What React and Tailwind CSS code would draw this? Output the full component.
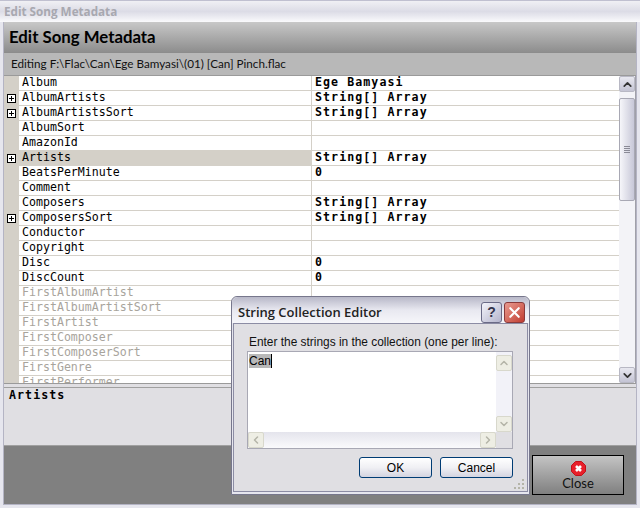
import { ChevronUp, ChevronDown, ChevronLeft, ChevronRight, X } from 'lucide-react'

const rows = [
  { name: 'Album', value: 'Ege Bamyasi' },
  { name: 'AlbumArtists', value: 'String[] Array', plus: true },
  { name: 'AlbumArtistsSort', value: 'String[] Array', plus: true },
  { name: 'AlbumSort' },
  { name: 'AmazonId' },
  { name: 'Artists', value: 'String[] Array', plus: true, selected: true },
  { name: 'BeatsPerMinute', value: '0' },
  { name: 'Comment' },
  { name: 'Composers', value: 'String[] Array' },
  { name: 'ComposersSort', value: 'String[] Array', plus: true },
  { name: 'Conductor' },
  { name: 'Copyright' },
  { name: 'Disc', value: '0' },
  { name: 'DiscCount', value: '0' },
  { name: 'FirstAlbumArtist', muted: true },
  { name: 'FirstAlbumArtistSort', muted: true },
  { name: 'FirstArtist', muted: true },
  { name: 'FirstComposer', muted: true },
  { name: 'FirstComposerSort', muted: true },
  { name: 'FirstGenre', muted: true },
  { name: 'FirstPerformer', muted: true },
]

const mono = "font-['DejaVu_Sans_Mono',monospace] text-[11.6px]"
const monoBold = "font-['DejaVu_Sans_Mono',monospace] text-[11.6px] font-bold tracking-[1.07px] text-black"

const PlusBox = () => (
  <span className="relative block h-[9px] w-[9px] border border-black bg-white">
    <span className="absolute left-[1px] top-[3px] h-px w-[5px] bg-black" />
    <span className="absolute left-[3px] top-[1px] h-[5px] w-px bg-black" />
  </span>
)

const Row = ({ name, value, plus, selected, muted }) => (
  <div className="flex h-[15px] shrink-0">
    <div className="flex w-[15px] shrink-0 items-center justify-center bg-[#d4d0c8]">
      {plus && <PlusBox />}
    </div>
    <div
      className={`flex w-[292px] shrink-0 items-center border-b border-[#d4d0c8] pl-[3px] ${mono} ${selected ? 'bg-[#d4d0c8]' : 'bg-white'} ${muted ? 'text-[#a8a49c]' : 'text-black'}`}
    >
      {name}
    </div>
    <div className="w-px shrink-0 bg-[#d4d0c8]" />
    <div className={`flex flex-1 items-center border-b border-[#d4d0c8] bg-white pl-[3px] ${monoBold}`}>
      {value}
    </div>
  </div>
)

const MainScrollButton = ({ children }) => (
  <div className="flex h-[16px] w-[16px] items-center justify-center rounded-[2px] border border-[#b8b8c4] bg-gradient-to-b from-[#e8e8f0] to-[#c4c4d4] text-[#333]">
    {children}
  </div>
)

const MainScrollbar = () => (
  <div className="flex w-[17px] shrink-0 flex-col items-start border-r border-[#a0a0a8] bg-[#f3f3f7]">
    <MainScrollButton><ChevronUp size={13} strokeWidth={3.2} /></MainScrollButton>
    <div className="mt-[6px] flex h-[103px] w-[16px] items-center justify-center rounded-[2px] border border-[#a8a8b4] bg-gradient-to-r from-[#f6f6fa] to-[#c8c8d8]">
      <div className="flex w-[6px] flex-col gap-px">
        <span className="h-px bg-[#8a8a96]" />
        <span className="h-px bg-[#8a8a96]" />
        <span className="h-px bg-[#8a8a96]" />
        <span className="h-px bg-[#8a8a96]" />
      </div>
    </div>
    <div className="flex-1" />
    <MainScrollButton><ChevronDown size={13} strokeWidth={3.2} /></MainScrollButton>
  </div>
)

const DisabledArrow = ({ children, className = '' }) => (
  <div className={`flex h-[16px] w-[16px] items-center justify-center rounded-[2px] border border-[#d8d8cc] bg-[#eeeee4] text-[#b4b4a8] ${className}`}>
    {children}
  </div>
)

const DialogButton = ({ children }) => (
  <button className="h-[21px] w-[73px] rounded-[3px] border border-[#003c74] bg-gradient-to-b from-white via-[#f0f0f4] to-[#d4d4e0] font-['Liberation_Sans',sans-serif] text-[12px] text-black">
    {children}
  </button>
)

const StringEditor = () => (
  <div className="absolute left-[231px] top-[296px] flex h-[199px] w-[299px] flex-col rounded-t-[6px] border border-[#77778c] bg-[#e6e6ee] px-px pb-[2px]">
    <div className="-mx-px flex h-[26px] shrink-0 items-start justify-between rounded-t-[6px] bg-gradient-to-b from-[#b8b8c8] via-[#e8e8f0] to-[#f6f6fa] pl-[6px] pr-[4px] pt-[5px]">
      <span className="font-['Open_Sans',sans-serif] text-[13px] font-semibold leading-[21px] text-[#222]">String Collection Editor</span>
      <div className="flex gap-[2px]">
        <div className="flex h-[21px] w-[21px] items-center justify-center rounded-[3px] border border-[#6a6a86] bg-gradient-to-br from-[#f4f4fa] to-[#b4b4cc] font-['Liberation_Sans',sans-serif] text-[14px] font-bold text-[#33334a]">?</div>
        <div className="flex h-[21px] w-[21px] items-center justify-center rounded-[3px] border border-[#8a3a3a] bg-gradient-to-br from-[#e89a90] to-[#c03a30] text-white">
          <X size={17} strokeWidth={3} />
        </div>
      </div>
    </div>
    <div className="flex min-h-0 flex-1 flex-col border border-[#8c8ca4] bg-[#e0dfe3] pl-[13px] pr-[14px] pt-[11px]">
      <div className="ml-[2px] font-['Liberation_Sans',sans-serif] text-[11.9px] leading-[14px] text-[#111]">
        Enter the strings in the collection (one per line):
      </div>
      <div className="mt-[2px] flex h-[98px] shrink-0 flex-col border border-[#a8a8b4] bg-white">
        <div className="flex min-h-0 flex-1">
          <div className="flex-1 pl-[1px] pt-[2px] font-['Liberation_Sans',sans-serif] text-[12px] leading-[15px] text-black">
            <span className="bg-[#b8b8b8]">Can</span><span className="inline-block h-[14px] w-px bg-black align-top" />
          </div>
          <div className="flex w-[16px] shrink-0 flex-col justify-between bg-[#f2f2f8] pt-[3px]">
            <DisabledArrow><ChevronUp size={12} strokeWidth={3} /></DisabledArrow>
            <DisabledArrow><ChevronDown size={12} strokeWidth={3} /></DisabledArrow>
          </div>
        </div>
        <div className="flex h-[16px] shrink-0 bg-gradient-to-b from-[#e4e4ec] to-[#fafafc]">
          <DisabledArrow><ChevronLeft size={12} strokeWidth={3} /></DisabledArrow>
          <div className="flex-1" />
          <DisabledArrow><ChevronRight size={12} strokeWidth={3} /></DisabledArrow>
          <div className="w-[16px] shrink-0 bg-[#e0dfe3]" />
        </div>
      </div>
      <div className="mt-[8px] flex justify-end gap-[8px]">
        <DialogButton>OK</DialogButton>
        <DialogButton>Cancel</DialogButton>
      </div>
    </div>
    <svg className="absolute bottom-[4px] right-[4px]" width="11" height="11" viewBox="0 0 11 11" fill="#b4b4a8">
      <rect x="8" y="0" width="2" height="2" />
      <rect x="4" y="4" width="2" height="2" />
      <rect x="8" y="4" width="2" height="2" />
      <rect x="0" y="8" width="2" height="2" />
      <rect x="4" y="8" width="2" height="2" />
      <rect x="8" y="8" width="2" height="2" />
    </svg>
  </div>
)

const CloseIcon = () => (
  <svg width="15" height="15" viewBox="0 0 15 15">
    <path d="M4.5 0.5h6l4 4v6l-4 4h-6l-4-4v-6z" fill="#e8202a" stroke="#c01018" />
    <path d="M5 5l5 5M10 5l-5 5" stroke="#fff" strokeWidth="2.6" />
  </svg>
)

export default function App() {
  return (
    <div className="relative flex h-[508px] w-[640px] flex-col overflow-hidden bg-[#e6e6ee]">
      <div className="flex h-[22px] shrink-0 items-center border-t border-[#c0c0d0] bg-gradient-to-b from-[#f0f0f4] via-[#dcdce6] to-[#fafafc] pl-[4px] font-['Open_Sans',sans-serif] text-[11.7px] font-bold text-[#a8a8b0]">
        Edit Song Metadata
      </div>
      <div className="mx-[3px] mb-[3px] flex min-h-0 flex-1 flex-col border-x border-b border-[#b4b4c4]">
        <div className="flex h-[30px] shrink-0 items-center bg-gradient-to-b from-[#c8c8c8] to-[#8e8e8e] pl-[5px] font-['Lato',sans-serif] text-[16.8px] font-bold text-black">
          Edit Song Metadata
        </div>
        <div className="flex h-[23px] shrink-0 items-center border-t border-[#8c8c8c] bg-[#b8b8b8] pl-[7px] font-['Lato',sans-serif] text-[11.7px] text-[#111]">
          Editing F:\Flac\Can\Ege Bamyasi\(01) [Can] Pinch.flac
        </div>
        <div className="flex h-[309px] shrink-0 border-y border-[#9a9a9a] bg-white">
          <div className="flex min-w-0 flex-1 flex-col overflow-hidden">
            {rows.map((row) => (
              <Row key={row.name} {...row} />
            ))}
          </div>
          <MainScrollbar />
        </div>
        <div className="h-[3px] shrink-0 bg-[#e0dfe3]" />
        <div className={`h-[59px] shrink-0 border-y border-[#a0a0a0] bg-[#e0dfe3] pl-[5px] leading-[14px] ${monoBold}`}>
          Artists
        </div>
        <div className="flex flex-1 items-start justify-end bg-[#808080] pr-[12px] pt-[9px]">
          <button className="flex h-[40px] w-[92px] flex-col items-center border border-black bg-gradient-to-b from-[#c4c4c4] to-[#808080] pt-[5px] font-['Lato',sans-serif] text-[13px] leading-[14px] text-[#111]">
            <CloseIcon />
            Close
          </button>
        </div>
      </div>
      <StringEditor />
    </div>
  )
}
